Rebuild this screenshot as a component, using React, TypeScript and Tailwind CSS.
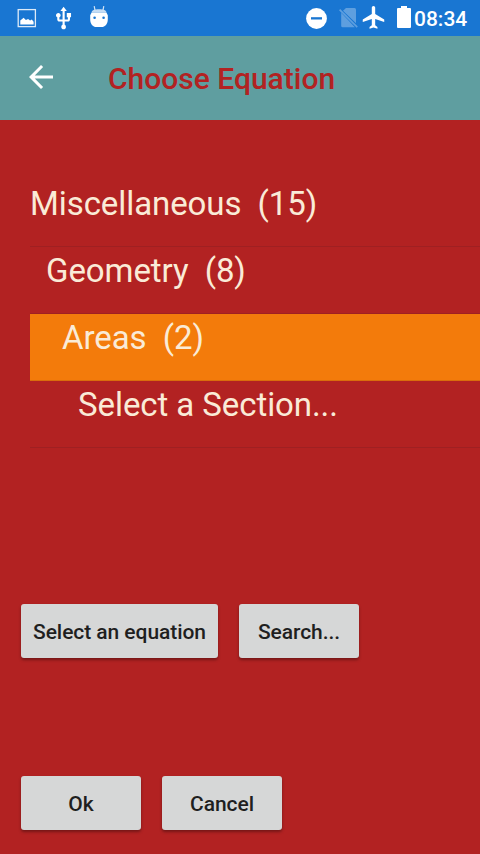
import React from "react";

const sections = [
  { label: "Miscellaneous", count: 15, indent: "pl-0", selected: false },
  { label: "Geometry", count: 8, indent: "pl-4", selected: false },
  { label: "Areas", count: 2, indent: "pl-8", selected: true },
  { label: "Select a Section...", count: null, indent: "pl-12", selected: false },
];

function StatusBar() {
  return (
    <div className="flex h-9 w-full shrink-0 bg-[#1976d2] text-white">
      <svg width="412" height="36" viewBox="0 0 412 36" fill="currentColor">
        <rect x="18.2" y="9.6" width="17.2" height="17" fill="none" stroke="currentColor" strokeOpacity="0.85" strokeWidth="1.3" />
        <path d="M20.3 24.6v-4l1.800-1.600 1.500-1.300 2.300 2.200 2.200-1 2 1.500 1.700-.8 1.800 2.200v2.800z" />
        <path
          transform="translate(50.9 5.7) scale(1.06)"
          d="M15 7v4h1v2h-3V5h2l-3-4-3 4h2v8H8v-2.07c.7-.37 1.2-1.08 1.2-1.93 0-1.21-.99-2.2-2.2-2.2-1.21 0-2.2.99-2.2 2.2 0 .85.5 1.56 1.2 1.93V13c0 1.11.89 2 2 2h3v3.05c-.71.37-1.2 1.1-1.2 1.95 0 1.22.99 2.2 2.2 2.2 1.21 0 2.2-.98 2.2-2.2 0-.85-.49-1.58-1.2-1.95V15h3c1.11 0 2-.89 2-2v-2h1V7h-4z"
        />
        <path d="M94.2 6.2l.8 4M103.8 6.2l-.8 4" stroke="currentColor" strokeWidth="1.200" strokeOpacity="0.8" />
        <path d="M91.500 12.800c0-2.500 3-3.600 7.500-3.600s7.500 1.100 7.500 3.600z" fillOpacity="0.75" />
        <path fillRule="evenodd" d="M91.500 12.800h15l1.300 2.400v4c0 4.800-2.600 7.800-6.300 7.800h-5c-3.700 0-6.300-3-6.300-7.800v-4zM94.600 16.500a1.300 1.300 0 1 0 0 2.600 1.300 1.300 0 0 0 0-2.600zM103.600 16.500a1.300 1.300 0 1 0 0 2.600 1.300 1.300 0 0 0 0-2.600z" />
        <circle cx="316.500" cy="18.500" r="10.400" />
        <rect x="311" y="17.200" width="11" height="2.300" fill="#1976d2" />
        <g fillOpacity="0.3">
          <path d="M346 8h8.500q1.500 0 1.500 1.500v13.700L343 10.800z" />
          <path d="M341.200 12.700l13.700 14.500h-12.200q-1.500 0-1.500-1.500z" />
          <path d="M340.200 9l17.600 17.600-1.100 1.200L339 10.200z" />
        </g>
        <path
          transform="translate(360.500 3.800) scale(1.13)"
          d="M21 16v-2l-8-5V3.500c0-.83-.67-1.500-1.500-1.500S10 2.670 10 3.500V9l-8 5v2l8-2.500V19l-2 1.500V22l3.500-1 3.500 1v-1.500L13 19v-5.500l8 2.500z"
        />
        <path d="M401 6h6v2h3q1 0 1 1v18q0 1-1 1h-12q-1 0-1-1V9q0-1 1-1h3z" />
      </svg>
      <span className="ml-[2px] text-[21px] leading-[38px] font-medium">08:34</span>
    </div>
  );
}

function ActionBar() {
  return (
    <header className="flex h-[84px] shrink-0 items-center bg-[#5f9ea0] pl-[23px]">
      <svg className="-mt-[2px] shrink-0" width="36" height="36" viewBox="0 0 24 24" fill="white">
        <path d="M20 11H7.830l5.590-5.590L12 4l-8 8 8 8 1.410-1.410L7.830 13H20v-2z" />
      </svg>
      <h1 className="ml-[49px] pt-[2px] text-[30px] leading-[36px] font-medium text-[#b22222]">Choose Equation</h1>
    </header>
  );
}

function RaisedButton({ children, width }: { children: React.ReactNode; width: string }) {
  return (
    <button
      className={`h-[54px] ${width} rounded-[3px] bg-[#d6d7d7] pt-[2px] text-[21px] leading-[25px] font-medium tracking-[-0.06px] whitespace-nowrap text-[#1f1f1f] shadow-[0_2px_3px_rgba(0,0,0,0.35)]`}
    >
      {children}
    </button>
  );
}

export default function App() {
  return (
    <div className="flex h-[854px] w-[480px] flex-col overflow-hidden bg-[#b22222] font-['Roboto',sans-serif]">
      <StatusBar />
      <ActionBar />
      <ul className="mt-[60px] ml-[30px] h-[424px] shrink-0 text-[#faebd7]">
        {sections.map((s) => (
          <li
            key={s.label}
            className={`h-[67px] border-b text-[33px] leading-[47px] tracking-[-0.08px] whitespace-pre ${s.indent} ${s.selected ? "border-[#d96d0c] bg-[#f37b0b]" : "border-[#9f2022]"}`}
          >
            {s.count === null ? s.label : `${s.label}  (${s.count})`}
          </li>
        ))}
      </ul>
      <div className="flex gap-[21px] pl-[21px]">
        <RaisedButton width="w-[197px]">Select an equation</RaisedButton>
        <RaisedButton width="w-[120px]">Search...</RaisedButton>
      </div>
      <div className="mt-[118px] flex gap-[21px] pl-[21px]">
        <RaisedButton width="w-[120px]">Ok</RaisedButton>
        <RaisedButton width="w-[120px]">Cancel</RaisedButton>
      </div>
    </div>
  );
}
